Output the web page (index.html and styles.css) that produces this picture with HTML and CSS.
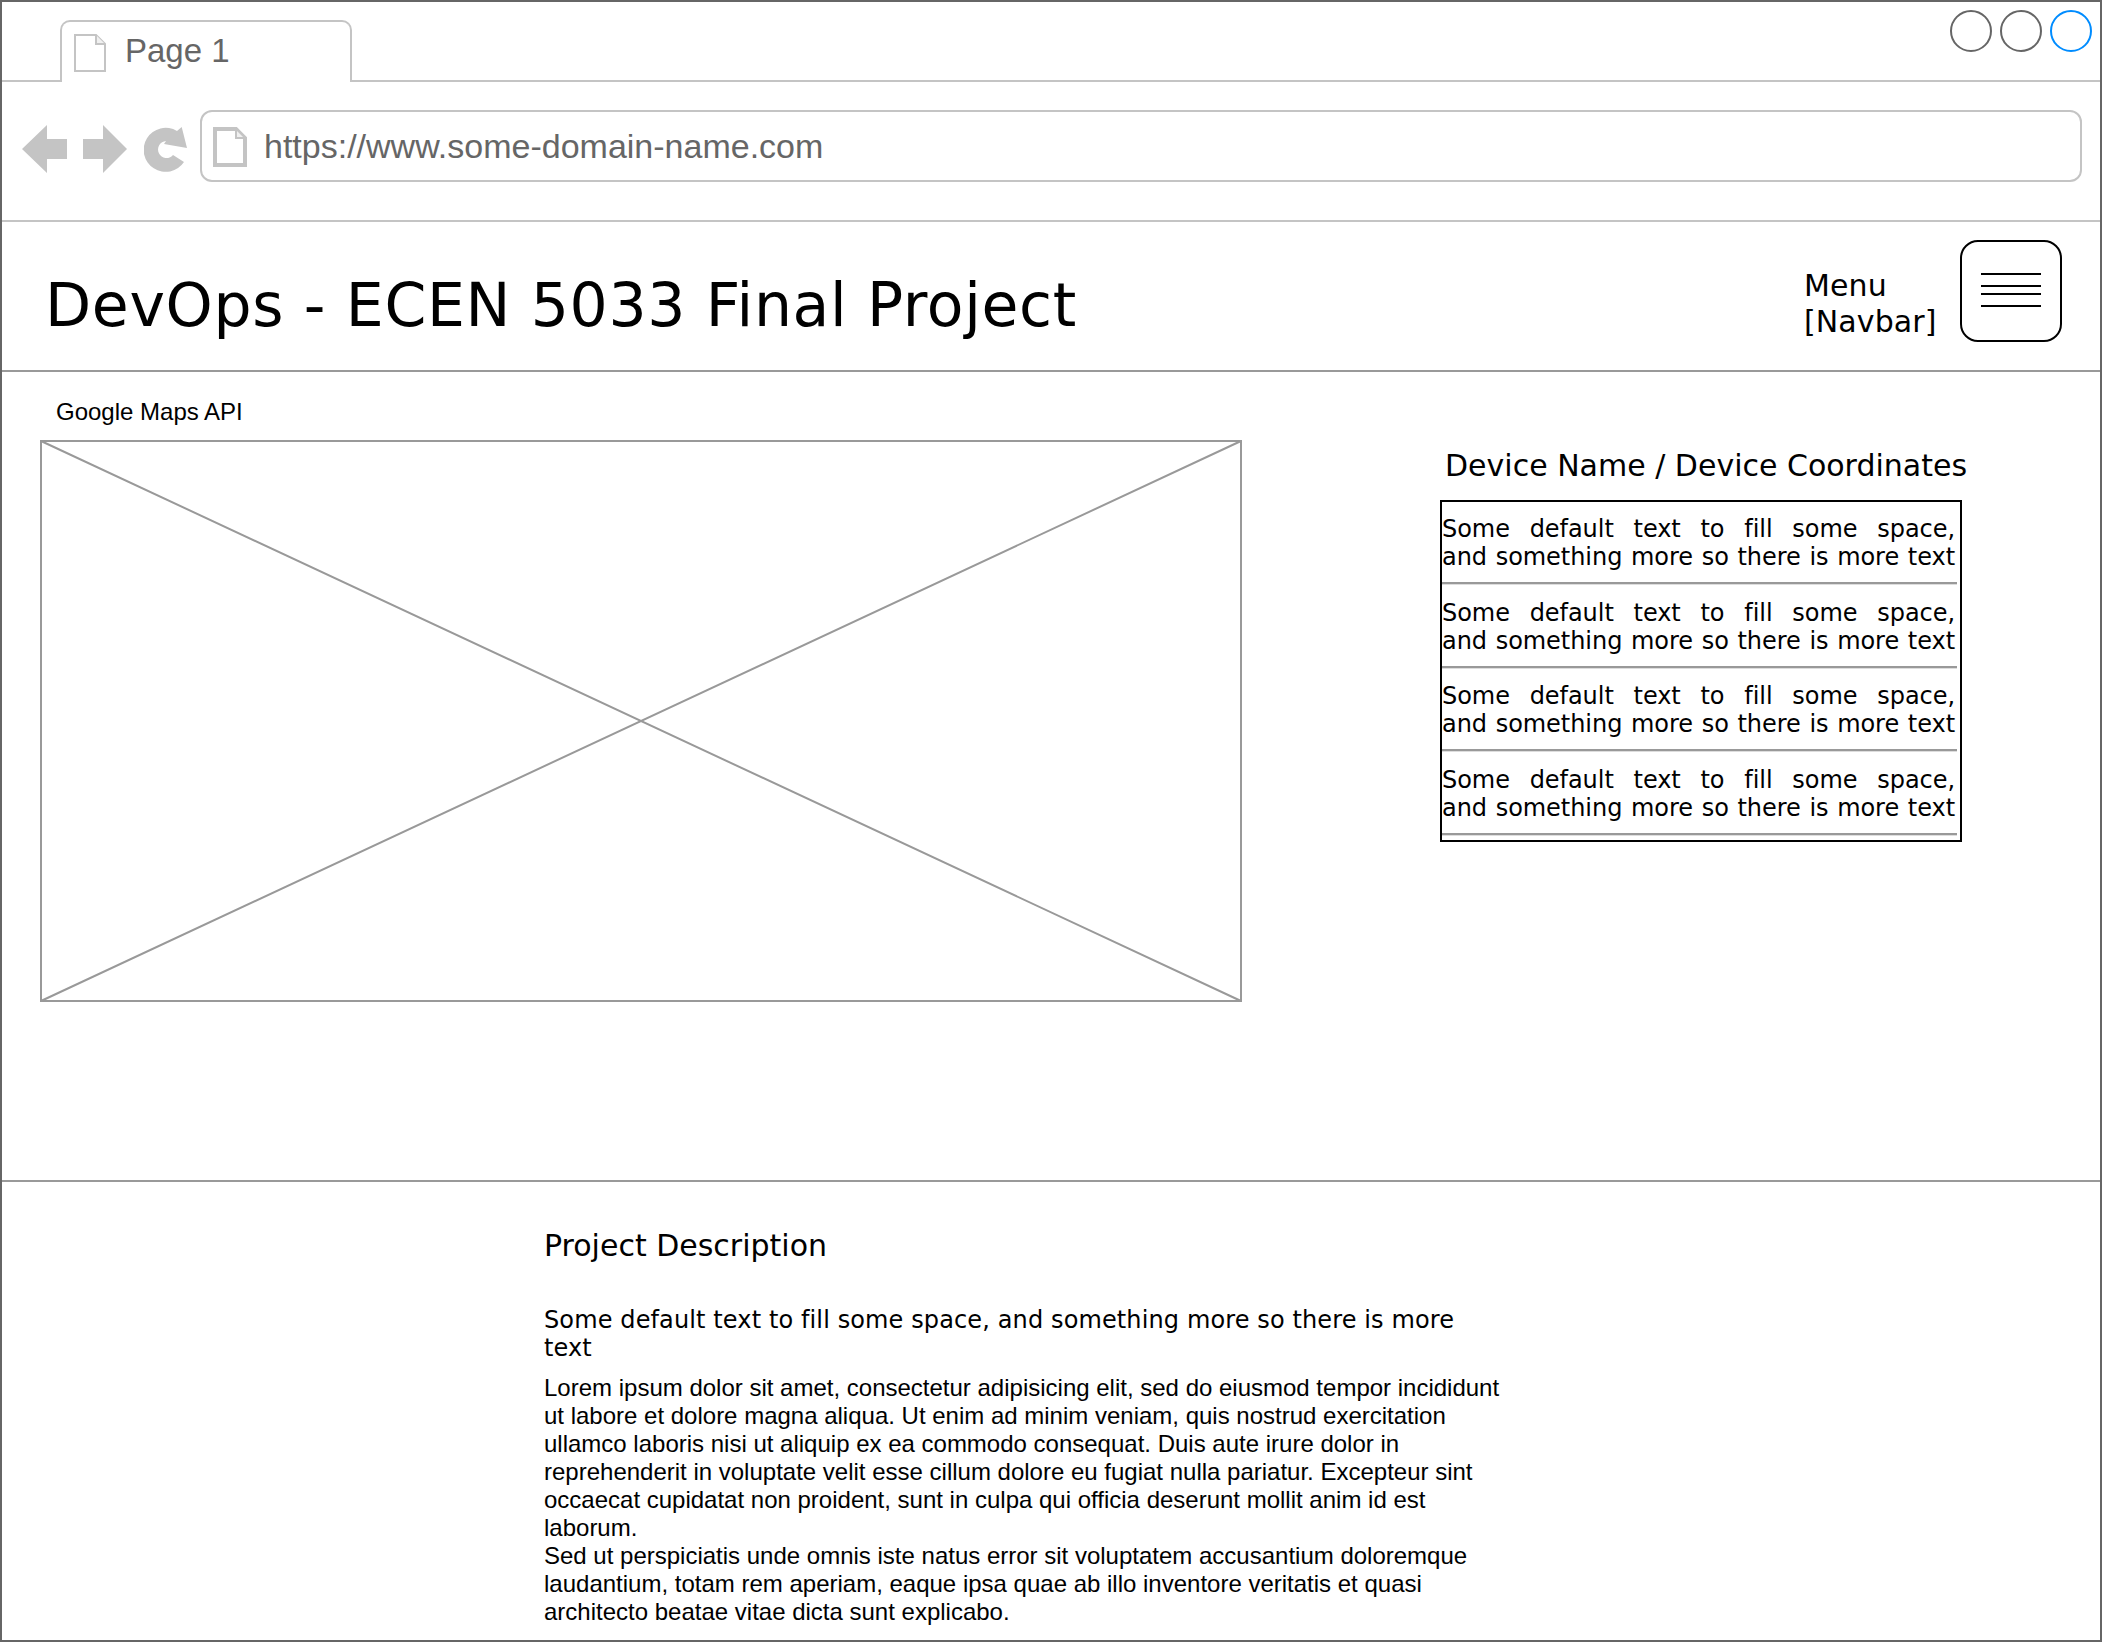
FILE: index.html
```
<!DOCTYPE html>
<html lang="en">
<head>
<meta charset="utf-8">
<title>DevOps - ECEN 5033 Final Project</title>
<link rel="stylesheet" href="styles.css">
</head>
<body>
<div class="window">
  <div class="tabbar">
    <div class="tab">
      <svg class="doc-small" width="32" height="38" viewBox="0 0 32 38"><path d="M1 1H22L31 10V37H1Z" fill="none" stroke="#c4c4c4" stroke-width="2"/><path d="M22 1V10H31" fill="#f0f0f0" stroke="#c4c4c4" stroke-width="2"/></svg>
      <span class="tab-label">Page 1</span>
    </div>
    <div class="controls">
      <span class="dot"></span>
      <span class="dot"></span>
      <span class="dot dot-active"></span>
    </div>
  </div>
  <div class="addressbar">
    <div class="nav-icons">
      <svg width="45" height="48" viewBox="0 0 45 48"><path d="M0 24L25 0V14H45V34H25V48Z" fill="#c4c4c4"/></svg>
      <svg width="44" height="48" viewBox="0 0 44 48"><path d="M44 24L20 0V14H0V34H20V48Z" fill="#c4c4c4"/></svg>
      <svg class="reload" width="44" height="46" viewBox="0 0 44 46"><path d="M40 35A22 22 0 1 1 33 4L37.7 0L43 21L20 17L22 14A8.5 8.5 0 1 0 29 28Z" fill="#c4c4c4"/></svg>
    </div>
    <div class="urlbox">
      <svg class="doc-large" width="34" height="40" viewBox="0 0 34 40"><path d="M2 2H23L32 11V38H2Z" fill="none" stroke="#c4c4c4" stroke-width="4"/><path d="M23 3V11H31" fill="#f0f0f0" stroke="#c4c4c4" stroke-width="2"/></svg>
      <span class="url">https://www.some-domain-name.com</span>
    </div>
  </div>
  <header class="pagehead">
    <h1 class="title">DevOps - ECEN 5033 Final Project</h1>
    <div class="menu">
      <div class="menu-label">Menu<br>[Navbar]</div>
      <div class="burger"><span></span><span></span><span></span><span></span></div>
    </div>
  </header>
  <main class="content">
    <section class="map-col">
      <div class="map-label">Google Maps API</div>
      <svg class="map" width="1202" height="562" viewBox="0 0 1202 562"><rect x="1" y="1" width="1200" height="560" fill="#fff" stroke="#999" stroke-width="2"/><path d="M1 1L1201 561M1201 1L1 561" stroke="#999" stroke-width="2" fill="none"/></svg>
    </section>
    <section class="device-col">
      <h2 class="device-title">Device Name / Device Coordinates</h2>
      <div class="device-list">
        <div class="device-item">Some default text to fill some space,<br>and something more so there is more text</div>
        <div class="device-item">Some default text to fill some space,<br>and something more so there is more text</div>
        <div class="device-item">Some default text to fill some space,<br>and something more so there is more text</div>
        <div class="device-item">Some default text to fill some space,<br>and something more so there is more text</div>
      </div>
    </section>
  </main>
  <footer class="description">
    <h2 class="desc-title">Project Description</h2>
    <p class="desc-lead">Some default text to fill some space, and something more so there is more text</p>
    <p class="desc-body">Lorem ipsum dolor sit amet, consectetur adipisicing elit, sed do eiusmod tempor incididunt ut labore et dolore magna aliqua. Ut enim ad minim veniam, quis nostrud exercitation ullamco laboris nisi ut aliquip ex ea commodo consequat. Duis aute irure dolor in reprehenderit in voluptate velit esse cillum dolore eu fugiat nulla pariatur. Excepteur sint occaecat cupidatat non proident, sunt in culpa qui officia deserunt mollit anim id est laborum.<br>Sed ut perspiciatis unde omnis iste natus error sit voluptatem accusantium doloremque laudantium, totam rem aperiam, eaque ipsa quae ab illo inventore veritatis et quasi architecto beatae vitae dicta sunt explicabo.</p>
  </footer>
</div>
</body>
</html>
```
FILE: styles.css
```
* { box-sizing: border-box; }
html, body { margin: 0; padding: 0; background: #fff; }
.window {
  width: 2102px;
  height: 1642px;
  border: 2px solid #666;
  display: flex;
  flex-direction: column;
  overflow: hidden;
  color: #000;
}
.tabbar {
  height: 80px;
  flex: none;
  border-bottom: 2px solid #c4c4c4;
  display: flex;
  justify-content: space-between;
  align-items: flex-start;
  padding: 8px 8px 0 58px;
}
.tab {
  width: 292px;
  height: 62px;
  margin-top: 10px;
  background: #fff;
  border: 2px solid #c4c4c4;
  border-bottom: 0;
  border-radius: 10px 10px 0 0;
  display: flex;
  align-items: flex-start;
  padding: 12px 0 0 12px;
}
.doc-small { flex: none; }
.tab-label {
  margin: -3px 0 0 19px;
  font: 33px/40px "Liberation Sans", Arial, sans-serif;
  color: #666;
}
.controls { display: flex; gap: 8px; }
.dot {
  width: 42px;
  height: 42px;
  border: 2px solid #666;
  border-radius: 50%;
}
.dot-active { border-color: #008cff; }
.addressbar {
  height: 140px;
  flex: none;
  border-bottom: 2px solid #c4c4c4;
  display: flex;
  align-items: flex-start;
  padding: 28px 18px 0 20px;
}
.nav-icons {
  display: flex;
  align-items: flex-start;
  gap: 16px;
  padding-top: 15px;
  width: 178px;
  flex: none;
}
.reload { margin-left: 1px; margin-top: 2px; }
.urlbox {
  flex: 1;
  height: 72px;
  border: 2px solid #c4c4c4;
  border-radius: 12px;
  display: flex;
  align-items: flex-start;
  padding: 15px 0 0 11px;
}
.doc-large { flex: none; }
.url {
  margin: -1px 0 0 17px;
  font: 34px/40px "Liberation Sans", Arial, sans-serif;
  color: #666;
}
.pagehead {
  height: 150px;
  flex: none;
  border-bottom: 2px solid #999;
  display: flex;
  justify-content: space-between;
  padding: 18px 38px 0 43px;
}
.title {
  margin: 0;
  padding-top: 29px;
  font: 400 60px/72px "DejaVu Sans", Verdana, sans-serif;
  letter-spacing: 0.65px;
}
.menu { display: flex; align-items: flex-start; }
.menu-label {
  margin-top: 28px;
  font: 30px/36px "DejaVu Sans", Verdana, sans-serif;
  letter-spacing: 0.1px;
  width: 156px;
}
.burger {
  width: 102px;
  height: 102px;
  border: 2px solid #000;
  border-radius: 18px;
  display: flex;
  flex-direction: column;
  align-items: center;
  padding-top: 31px;
}
.burger span {
  width: 60px;
  height: 2px;
  flex: none;
  background: #000;
  margin-bottom: 10px;
}
.burger span:nth-child(2) { margin-bottom: 6px; }
.content {
  height: 810px;
  flex: none;
  border-bottom: 2px solid #999;
  display: flex;
  padding: 0 0 0 38px;
}
.map-col { width: 1400px; flex: none; }
.map-label {
  margin: 26px 0 0 16px;
  font: 24px/28px "Liberation Sans", Arial, sans-serif;
  height: 42px;
}
.map { display: block; }
.device-col { width: 525px; flex: none; padding-top: 72px; }
.device-title {
  margin: 0 0 0 5px;
  font: 400 30px/44px "DejaVu Sans", Verdana, sans-serif;
  white-space: nowrap;
}
.device-list {
  margin-top: 12px;
  width: 522px;
  height: 342px;
  border: 2px solid #000;
  padding: 0 3px 0 0;
}
.device-item {
  height: 82px;
  margin-bottom: 1.7px;
  border-bottom: 2px solid #999;
  box-shadow: 0 1px 0 #ddd;
  font: 24px/28px "DejaVu Sans", Verdana, sans-serif;
  letter-spacing: -0.05px;
  text-align: justify;
  text-align-last: justify;
  padding: 13px 2px 0 0;
}
.description {
  flex: 1;
  padding: 42px 0 0 542px;
  width: 1506px;
}
.desc-title {
  margin: 0;
  font: 400 30px/44px "DejaVu Sans", Verdana, sans-serif;
}
.desc-lead {
  margin: 38px 0 0;
  font: 24px/28px "DejaVu Sans", Verdana, sans-serif;
  letter-spacing: 0.12px;
}
.desc-body {
  margin: 12px 0 0;
  font: 24px/28px "Liberation Sans", Arial, sans-serif;
}
```
